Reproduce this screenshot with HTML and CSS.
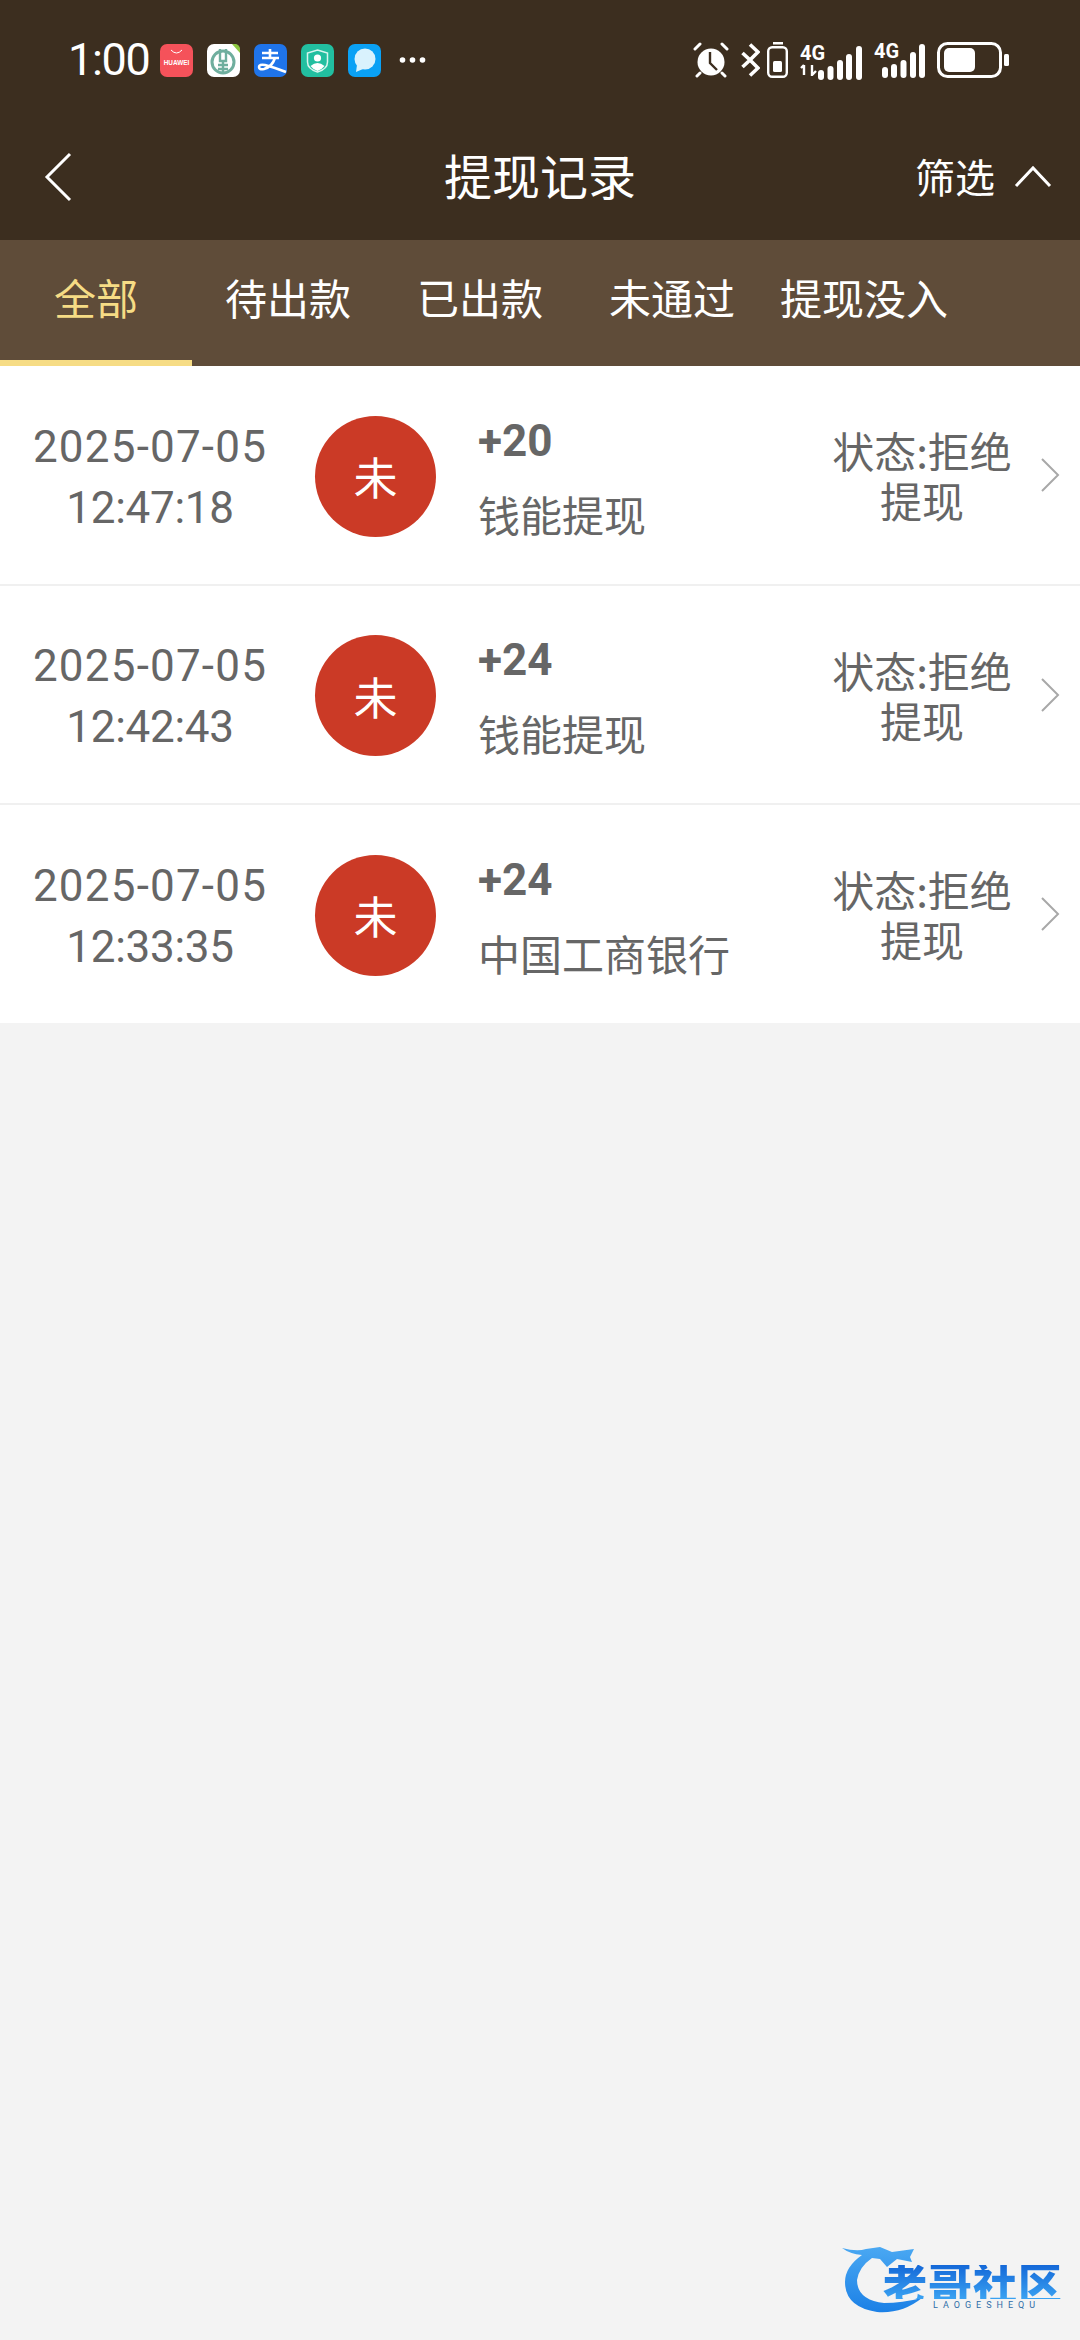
FILE: index.html
```html
<!DOCTYPE html>
<html lang="zh-CN">
<head>
<meta charset="utf-8">
<title>提现记录</title>
<link rel="stylesheet" href="styles.css">
</head>
<body>
<header class="top">
  <div class="status">
    <span class="time">1:00</span>
    <div class="apps">
      <svg class="app" viewBox="0 0 33 33"><rect width="33" height="33" rx="7" fill="#f5525a"/><path d="M11 6q5.500 6 11 0" fill="none" stroke="#fff" stroke-width="1"/><text x="16.500" y="21" class="hw">HUAWEI</text></svg>
      <svg class="app" viewBox="0 0 33 33"><rect width="33" height="33" rx="7" fill="#fff"/><circle cx="16" cy="18" r="11" fill="none" stroke="#6fae9e" stroke-width="3"/><path d="M13 5v12h6V5M16 17v13M11 21h10M11 25h10" fill="none" stroke="#6fae9e" stroke-width="2.400"/><path d="M25 0h3a5 5 0 0 1 5 5v4z" fill="#8cc63f"/></svg>
      <svg class="app" viewBox="0 0 33 33"><rect width="33" height="33" rx="7" fill="#1f74ea"/><path d="M16 5v8M8 9h16M8 14h17M21 14q-3 9-11 11q-5 1-5-2q0-3 6-2q8 2 21 7" fill="none" stroke="#fff" stroke-width="2.600"/></svg>
      <svg class="app" viewBox="0 0 33 33"><rect width="33" height="33" rx="7" fill="#22bfa0"/><path d="M16.500 6l10 3v9q0 7-10 10q-10-3-10-10V9z" fill="none" stroke="#d8f5ee" stroke-width="1.500"/><circle cx="16.500" cy="14" r="3.600" fill="#fff"/><path d="M9.500 22q7-6 14 0q-3 4-7 5q-4-1-7-5z" fill="#fff"/></svg>
      <svg class="app" viewBox="0 0 33 33"><rect width="33" height="33" rx="7" fill="#0aa1f5"/><circle cx="17" cy="15" r="10.500" fill="#d9f2fd"/><path d="M9 21l-1 7 7-3z" fill="#d9f2fd"/></svg>
      <svg class="more" viewBox="0 0 26 6"><circle cx="3" cy="3" r="2.800"/><circle cx="13" cy="3" r="2.800"/><circle cx="23" cy="3" r="2.800"/></svg>
    </div>
    <div class="sys">
      <svg class="alarm" viewBox="0 0 36 36"><circle cx="18" cy="20" r="13.500" fill="#fff"/><path d="M2 7l5-5M34 7l-5-5M7 31l-3 3M29 31l3 3" stroke="#fff" stroke-width="3" stroke-linecap="round"/><path d="M17 10v11l7 7" fill="none" stroke="#3c2e1f" stroke-width="2.400"/></svg>
      <svg class="bt" viewBox="0 0 19 34"><path d="M1.500 10L9 17l-7.500 7M9 1.500l8 7.500-8 8 8 8-8 7.500" fill="none" stroke="#fff" stroke-width="3.600"/></svg>
      <svg class="cell" viewBox="0 0 21 36"><rect x="6" y="0" width="10" height="2.500" fill="#fff"/><rect x="1.200" y="5.200" width="18.600" height="29.600" rx="4" fill="none" stroke="#fff" stroke-width="2.400"/><rect x="6" y="19" width="9" height="11" rx="1.500" fill="#fff"/></svg>
      <div class="net">
        <span class="g4">4G</span>
        <svg class="arrows" viewBox="0 0 17 12"><path d="M4 1v10M1 4l3-3M12 1v10l4-4" fill="none" stroke="#fff" stroke-width="2.400"/></svg>
      </div>
      <svg class="bars" viewBox="0 0 44 34"><rect x="0" y="24" width="6" height="10" rx="3"/><rect x="9.500" y="20" width="6" height="14" rx="3"/><rect x="19" y="14" width="6" height="20" rx="3"/><rect x="28" y="8" width="6" height="26" rx="3"/><rect x="38" y="0" width="6" height="34" rx="3"/></svg>
      <div class="sim2">
        <span class="g4 g4-two">4G</span>
        <svg class="bars2" viewBox="0 0 43 34"><rect x="0" y="23" width="6" height="11" rx="3"/><rect x="9" y="20" width="6" height="14" rx="3"/><rect x="18.500" y="16" width="6" height="18" rx="3"/><rect x="28" y="8" width="6" height="26" rx="3"/><rect x="37" y="0" width="6" height="34" rx="3"/></svg>
      </div>
      <svg class="batt" viewBox="0 0 72 36"><rect x="1.500" y="1.500" width="62" height="33" rx="9" fill="none" stroke="#fff" stroke-width="3"/><rect x="7" y="6" width="31" height="24" rx="5" fill="#fff"/><rect x="67" y="12" width="5" height="12" rx="1.500" fill="#fff"/></svg>
    </div>
  </div>
  <nav class="nav">
    <div class="nav-left"><svg class="back" viewBox="0 0 28 50"><path d="M26 2L3 25l23 23" fill="none" stroke="#fff" stroke-width="3"/></svg></div>
    <h1 class="title">提现记录</h1>
    <div class="filter">
      <span>筛选</span>
      <svg class="up" viewBox="0 0 38 24"><path d="M2 22L19 4l17 18" fill="none" stroke="#fff" stroke-width="3"/></svg>
    </div>
  </nav>
</header>
<div class="tabs">
  <div class="tab active">全部</div>
  <div class="tab">待出款</div>
  <div class="tab">已出款</div>
  <div class="tab">未通过</div>
  <div class="tab">提现没入</div>
</div>
<main class="list">
  <div class="row">
    <div class="date"><div class="day">2025-07-05</div><div class="clock">12:47:18</div></div>
    <div class="badge">未</div>
    <div class="info"><div class="amount">+20</div><div class="dest">钱能提现</div></div>
    <div class="state">状态:拒绝<br>提现</div>
    <svg class="chev" viewBox="0 0 20 34"><path d="M2 1l16 16L2 33" fill="none" stroke="#a8a8a8" stroke-width="2"/></svg>
  </div>
  <div class="row">
    <div class="date"><div class="day">2025-07-05</div><div class="clock">12:42:43</div></div>
    <div class="badge">未</div>
    <div class="info"><div class="amount">+24</div><div class="dest">钱能提现</div></div>
    <div class="state">状态:拒绝<br>提现</div>
    <svg class="chev" viewBox="0 0 20 34"><path d="M2 1l16 16L2 33" fill="none" stroke="#a8a8a8" stroke-width="2"/></svg>
  </div>
  <div class="row">
    <div class="date"><div class="day">2025-07-05</div><div class="clock">12:33:35</div></div>
    <div class="badge">未</div>
    <div class="info"><div class="amount">+24</div><div class="dest">中国工商银行</div></div>
    <div class="state">状态:拒绝<br>提现</div>
    <svg class="chev" viewBox="0 0 20 34"><path d="M2 1l16 16L2 33" fill="none" stroke="#a8a8a8" stroke-width="2"/></svg>
  </div>
</main>
<div class="mark">
  <svg class="dragon" viewBox="0 0 85 70"><defs><linearGradient id="dg" x1="0" y1="0" x2="0" y2="1"><stop offset="0" stop-color="#4aa8f2"/><stop offset="1" stop-color="#1b80e6"/></linearGradient></defs><path d="M0 3Q15 7 24 4L38 2L50 7L72 4L68 12L70 17L55 14L45 22L38 14L30 13Q17 22 15 35Q15 55 42 58Q60 58 80 53Q60 69 35 67Q3 62 3 37Q3 22 20 10Q8 9 0 3Z" fill="url(#dg)"/></svg>
  <div class="mark-text">
    <div class="mark-cn">老哥社区</div>
    <div class="mark-en">LAOGESHEQU</div>
  </div>
</div>
</body>
</html>
```

FILE: styles.css
```css
* { box-sizing: border-box; }
html, body { margin: 0; padding: 0; }
body {
  width: 1080px;
  height: 2340px;
  background: #f3f3f3;
  font-family: "Noto Sans CJK SC", "Noto Sans", sans-serif;
  position: relative;
  overflow: hidden;
}
.top { background: #3c2e1f; height: 240px; color: #fff; }
.status {
  height: 120px;
  display: flex;
  align-items: center;
  padding-left: 68px;
}
.time {
  font-family: "Roboto", sans-serif;
  font-size: 45px;
  letter-spacing: -1.3px;
  line-height: 60px;
  width: 92px;
}
.apps { display: flex; align-items: center; gap: 14px; width: 533px; }
.app { width: 33px; height: 33px; display: block; }
.hw { font: 700 6.4px "Liberation Sans", sans-serif; fill: #fff; text-anchor: middle; }
.more { width: 27px; height: 6px; fill: #fff; margin-left: 4px; }
.sys { display: flex; align-items: center; height: 40px; }
.alarm { width: 36px; height: 36px; }
.bt { width: 19px; height: 34px; margin-left: 12px; }
.cell { width: 21px; height: 36px; margin-left: 7px; }
.net { width: 26px; margin-left: 12px; display: flex; flex-direction: column; }
.g4 {
  font: 700 20px/18px "Roboto", sans-serif;
  color: #fff;
  display: block;
}
.arrows { width: 17px; height: 12px; margin-top: 2px; }
.bars { width: 44px; height: 34px; fill: #fff; margin-left: -8px; align-self: flex-end; }
.sim2 { width: 50px; height: 36px; margin-left: 12px; position: relative; }
.g4-two { position: absolute; left: 0; top: 0; }
.bars2 { width: 43px; height: 34px; fill: #fff; display: block; margin: 2px 0 0 8px; }
.batt { width: 72px; height: 36px; margin-left: 13px; }
.nav {
  height: 120px;
  display: grid;
  grid-template-columns: 1fr auto 1fr;
  align-items: center;
  padding: 0 28px 7px;
}
.nav-left { display: flex; align-items: center; padding-left: 16px; }
.back { width: 28px; height: 50px; }
.title {
  margin: 0;
  text-align: center;
  font-size: 48px;
  font-weight: 400;
  line-height: 64px;
  padding-bottom: 6px;
}
.filter { display: flex; align-items: center; justify-content: flex-end; gap: 19px; font-size: 40px; line-height: 56px; padding-bottom: 2px; }
.up { width: 38px; height: 24px; }
.tabs { height: 126px; background: #5f4c39; display: flex; }
.tab {
  width: 192px;
  height: 126px;
  padding-top: 29px;
  text-align: center;
  font-size: 42px;
  line-height: 56px;
  color: #fff;
}
.tab.active { color: #f6dc85; border-bottom: 6px solid #f6dc85; }
.list { display: flex; flex-direction: column; }
.row {
  height: 219px;
  background: #fff;
  border-bottom: 2px solid #f0f0f0;
  display: flex;
  align-items: center;
  color: #666;
}
.row:first-child { height: 220px; }
.row:last-child { border-bottom: 0; height: 218px; }
.date {
  width: 300px;
  padding-top: 5px;
  text-align: center;
  font-family: "Roboto", sans-serif;
  font-size: 44px;
  line-height: 61px;
}
.day { letter-spacing: 1.2px; }
.clock { letter-spacing: -0.3px; }
.badge {
  width: 121px;
  height: 121px;
  margin-left: 15px;
  margin-top: 2px;
  border-radius: 50%;
  background: #cb3a26;
  color: #fff;
  font-size: 44px;
  display: flex;
  align-items: center;
  justify-content: center;
}
.info { width: 351px; margin-left: 42px; padding-top: 12px; }
.amount { font-family: "Roboto", sans-serif; font-size: 44px; font-weight: 700; line-height: 56px; margin-top: -8px; }
.dest { font-size: 42px; line-height: 56px; margin-top: 17px; }
.state {
  width: 186px;
  text-align: center;
  font-size: 42px;
  line-height: 50px;
}
.chev { width: 20px; height: 34px; margin-left: 25px; }
.mark {
  position: absolute;
  left: 842px;
  top: 2245px;
  width: 225px;
  height: 70px;
}
.dragon { position: absolute; left: 0; top: 0; width: 85px; height: 70px; }
.mark-text { position: absolute; left: 41px; top: 20px; width: 184px; }
.mark-cn {
  font-size: 44px;
  line-height: 34px;
  font-weight: 900;
  background: linear-gradient(#1468d8, #3aa2f2);
  -webkit-background-clip: text;
  background-clip: text;
  color: transparent;
  white-space: nowrap;
  letter-spacing: 1px;
}
.mark-en {
  font: 400 9px/10px "Roboto", sans-serif;
  letter-spacing: 5px;
  color: #2f6ea8;
  margin-left: 50px;
  margin-top: 1px;
}
```
